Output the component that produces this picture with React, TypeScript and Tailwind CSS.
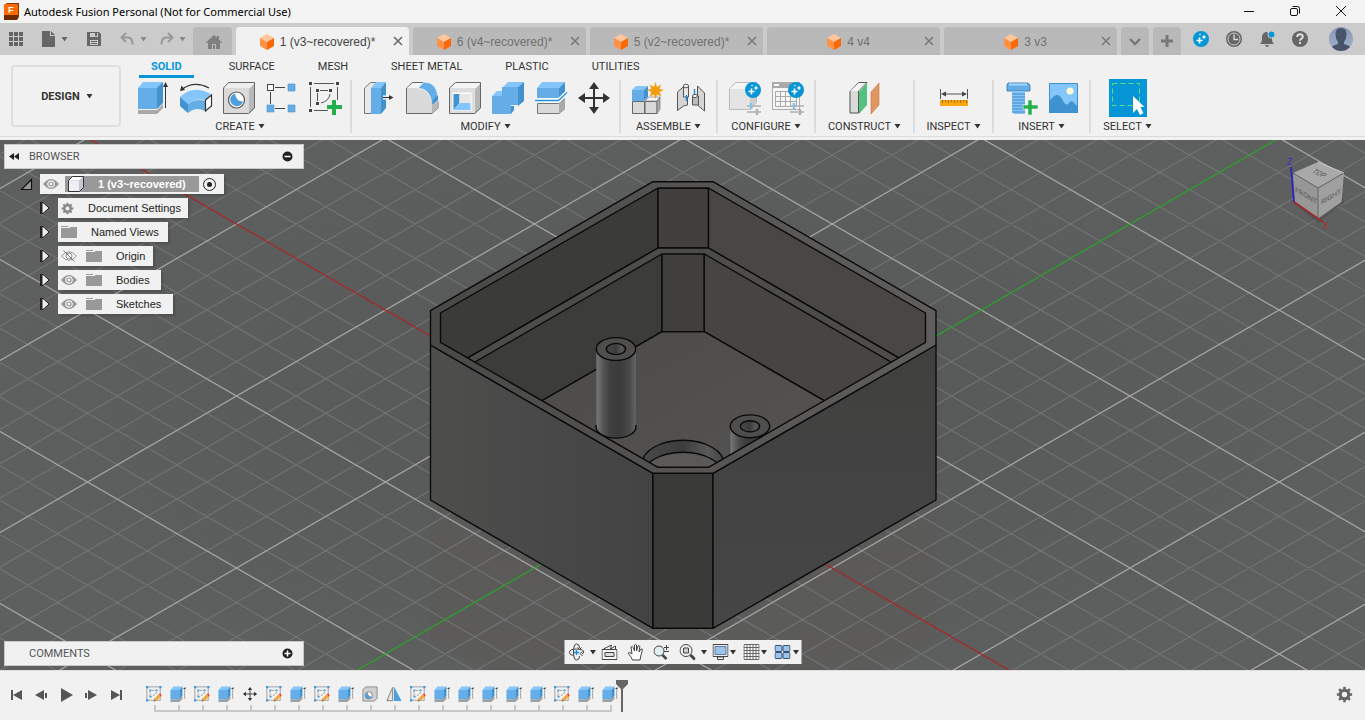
import type { ReactNode } from 'react'

const documents = [
  { name: '1 (v3~recovered)*', active: true },
  { name: '6 (v4~recovered)*', active: false },
  { name: '5 (v2~recovered)*', active: false },
  { name: '4 v4', active: false },
  { name: '3 v3', active: false },
]

const workspaceTabs = ['SURFACE', 'MESH', 'SHEET METAL', 'PLASTIC', 'UTILITIES']

type Feature = 'sketch' | 'extrude' | 'move' | 'hole' | 'mirror'

const timeline: Feature[] = [
  'sketch', 'extrude', 'sketch', 'extrude', 'move', 'sketch', 'extrude',
  'sketch', 'extrude', 'hole', 'mirror', 'sketch', 'extrude', 'extrude',
  'extrude', 'extrude', 'extrude', 'sketch', 'extrude', 'extrude',
]

export default function App() {
  return (
    <div className="flex min-h-screen flex-col bg-[#f1f1f1] font-['Liberation_Sans',Arial,sans-serif] text-[#333]">
      <TitleBar />
      <DocumentBar />
      <Ribbon />
      <Viewport />
      <Timeline />
    </div>
  )
}

function Caret({ className = 'text-[#333]' }: { className?: string }) {
  return (
    <svg viewBox="0 0 7 5" className={`h-[5px] w-[7px] shrink-0 ${className}`} fill="currentColor">
      <path d="M.5 0h6L3.500 4.500z" />
    </svg>
  )
}

/* ---------- title bar and document tabs ---------- */

function TitleBar() {
  return (
    <header className="flex h-[23px] items-center bg-[#f3f3f3] pl-[3px] pr-4">
      <svg viewBox="0 0 16 18" className="h-[18px] w-4">
        <path d="M1 2l3-2h12v14l-2 3H1z" fill="#8a3a08" />
        <path d="M2 1h11a2 2 0 0 1 2 2v9H1V2z" fill="#ff6b00" />
        <path d="M1 12h14v3l-2 2H1z" fill="#6d2a05" />
        <text x="5" y="10" fontSize="9" fontWeight="700" fill="#fff">F</text>
      </svg>
      <h1 className="ml-[5px] flex-1 font-['Noto_Sans','Open_Sans',sans-serif] text-[11px] leading-[20px] text-black">
        Autodesk Fusion Personal (Not for Commercial Use)
      </h1>
      <div className="flex gap-[30px]">
        <button aria-label="Minimize">
          <svg viewBox="0 0 16 16" className="size-4" stroke="#111"><path d="M3 7.500h10" /></svg>
        </button>
        <button aria-label="Restore">
          <svg viewBox="0 0 16 16" className="size-4" fill="none" stroke="#111">
            <rect x="3.500" y="4.500" width="7" height="7" rx="1.500" />
            <path d="M5.500 2.500h5a2 2 0 0 1 2 2v5" />
          </svg>
        </button>
        <button aria-label="Close">
          <svg viewBox="0 0 16 16" className="size-4" stroke="#111"><path d="M3 2l10 10M13 2L3 12" /></svg>
        </button>
      </div>
    </header>
  )
}

function DocumentBar() {
  return (
    <nav className="flex h-8 bg-[#cbcbcb]">
      <div className="flex w-[193px] shrink-0 items-center pl-[9px] text-[#666]">
        <button aria-label="Show data panel">
          <svg viewBox="0 0 14 14" className="size-[14px]" fill="currentColor">
            {[0, 5, 10].map((y) => [0, 5, 10].map((x) => <rect key={`${x}-${y}`} x={x} y={y} width="4" height="4" />))}
          </svg>
        </button>
        <button aria-label="File" className="ml-[19px] flex items-center gap-[6px]">
          <svg viewBox="0 0 13 16" className="h-4 w-[13px]" fill="currentColor">
            <path d="M0 0h8v5h5v11H0z" /><path d="M9 0l4 4H9z" />
          </svg>
          <Caret className="text-[#666]" />
        </button>
        <button aria-label="Save" className="ml-[19px]">
          <svg viewBox="0 0 14 14" className="size-[14px]">
            <path d="M0 0h12l2 2v12H0z" fill="currentColor" />
            <path d="M3 1h8v4H3zM3 8h8v5H3z" fill="#cbcbcb" />
            <path d="M8 1h2v3H8zM4 9h6v1H4zM4 11h6v1H4z" fill="currentColor" />
          </svg>
        </button>
        <button aria-label="Undo" className="ml-[19px] flex items-center gap-[6px] text-[#999]">
          <svg viewBox="0 0 14 14" className="size-[14px]" fill="none" stroke="currentColor" strokeWidth="2">
            <path d="M6 1L1.500 5.500 6 10M2 5.500h6q4.500 0 4.500 7" />
          </svg>
          <Caret className="text-[#888]" />
        </button>
        <button aria-label="Redo" className="ml-[13px] flex items-center gap-[5px] text-[#999]">
          <svg viewBox="0 0 14 14" className="size-[14px]" fill="none" stroke="currentColor" strokeWidth="2">
            <path d="M8 1l4.500 4.500L8 10M12 5.500H6q-4.500 0-4.500 7" />
          </svg>
          <Caret className="text-[#888]" />
        </button>
      </div>
      <div className="flex min-w-0 flex-1 gap-1 pt-1">
        <button aria-label="Home" className="flex w-[39px] shrink-0 items-center justify-center rounded-t bg-[#b9b9b9] pl-[3px] pt-[2px]">
          <svg viewBox="0 0 16 14" className="h-[14px] w-4" fill="#808080">
            <path d="M8 0l3 2.600V1h2v3.500l3 2.700-1 1-1-.8V14h-4V9H6v5H2V7.400l-1 .8-1-1z" />
            <path d="M7 10h2v4H7z" />
          </svg>
        </button>
        {documents.map((doc) => (
          <div
            key={doc.name}
            className={`flex min-w-0 flex-1 items-center rounded-t pl-3 text-[12px] leading-[14px] ${doc.active ? 'bg-[#f1f1f1] text-[#444]' : 'bg-[#b9b9b9] text-[#707070]'}`}
          >
            <button className="flex min-w-0 flex-1 items-center justify-center gap-[6px] pt-px">
              <DocumentCube />
              <span className="whitespace-nowrap">{doc.name}</span>
            </button>
            <button aria-label={`Close ${doc.name}`} className="flex w-[22px] justify-center">
              <svg viewBox="0 0 10 10" className="size-[10px]" stroke={doc.active ? '#666' : '#777'} strokeWidth="1.500">
                <path d="M1 1l8 8M9 1L1 9" />
              </svg>
            </button>
          </div>
        ))}
        <button aria-label="All documents" className="flex w-7 shrink-0 items-center justify-center rounded-t bg-[#b9b9b9] pt-[2px]">
          <svg viewBox="0 0 12 8" className="h-2 w-3" fill="none" stroke="#777" strokeWidth="2.400"><path d="M1 1l5 5 5-5" /></svg>
        </button>
        <button aria-label="New design" className="flex w-7 shrink-0 items-center justify-center rounded-t bg-[#b9b9b9]">
          <svg viewBox="0 0 14 14" className="size-[14px]" stroke="#777" strokeWidth="3"><path d="M7 1v12M1 7h12" /></svg>
        </button>
      </div>
      <div className="flex shrink-0 items-center gap-[15px] pl-[11px] pr-3">
        <button aria-label="Extensions">
          <svg viewBox="0 0 18 18" className="size-[18px]"><Sparkle x={9} y={9} r={8} /></svg>
        </button>
        <button aria-label="Job status">
          <svg viewBox="0 0 18 18" className="size-[18px]">
            <circle cx="9" cy="9" r="8" fill="#666" />
            <circle cx="9" cy="9" r="6" fill="none" stroke="#cbcbcb" />
            <path d="M9 4.500V9.500h4" fill="none" stroke="#ddd" strokeWidth="1.300" />
          </svg>
        </button>
        <button aria-label="Notifications">
          <svg viewBox="0 0 18 18" className="size-[18px]" fill="#666">
            <path d="M8 2q-4 1-4 5v3q0 2-2 4h14q-2-2-2-4V8L9 2z" />
            <path d="M7 15h4q-.5 2-2 2t-2-2z" />
            <circle cx="13.500" cy="4.500" r="3.500" fill="#0696d7" stroke="#cbcbcb" />
          </svg>
        </button>
        <button aria-label="Help">
          <svg viewBox="0 0 18 18" className="size-[18px]">
            <circle cx="9" cy="9" r="8" fill="#666" />
            <path d="M6.200 7q0-2.800 2.800-2.800T11.800 6.800Q11.800 8 10.300 8.800 9 9.500 9 10.700M9 12v2" fill="none" stroke="#ddd" strokeWidth="2" />
          </svg>
        </button>
        <button aria-label="Account" className="ml-[5px]">
          <svg viewBox="0 0 24 24" className="size-6">
            <defs>
              <clipPath id="avatar"><circle cx="12" cy="12" r="12" /></clipPath>
              <linearGradient id="avatarSky" x2="0" y2="1"><stop stopColor="#8a99b4" /><stop offset="1" stopColor="#9fb0cc" /></linearGradient>
            </defs>
            <g clipPath="url(#avatar)">
              <path d="M0 0h24v24H0z" fill="url(#avatarSky)" />
              <path d="M12 1q5.500 0 5.500 6 0 5-2.500 8v2q5 1 7 4v4H2v-4q2-3 7-4v-2Q6.500 12 6.500 7 6.500 1 12 1z" fill="#48546a" />
            </g>
          </svg>
        </button>
      </div>
    </nav>
  )
}

function DocumentCube() {
  return (
    <svg viewBox="0 0 14 16" className="h-4 w-[14px] shrink-0">
      <path d="M7 0l7 4-7 4-7-4z" fill="#ffc59b" />
      <path d="M0 4l7 4v8l-7-4z" fill="#ff9147" />
      <path d="M14 4L7 8v8l7-4z" fill="#f96a06" />
    </svg>
  )
}

function Sparkle({ x, y, r }: { x: number; y: number; r: number }) {
  return (
    <g>
      <circle cx={x} cy={y} r={r} fill="#0696d7" />
      <path d={`M${x - 1.5} ${y - 1.5}v6M${x - 4.5} ${y + 1.5}h6`} stroke="#fff" strokeWidth="1.600" />
      <path d={`M${x + 3} ${y - 4.5}l.8 1.700 1.700.8-1.700.8-.8 1.700-.8-1.700-1.700-.8 1.700-.8z`} fill="#fff" />
      <circle cx={x - 1} cy={y - 4.5} r=".8" fill="#fff" />
    </g>
  )
}

/* ---------- ribbon ---------- */

function Ribbon() {
  return (
    <section className="mb-[3px] flex h-[82px] border-b border-[#dcdcdc] pl-[11px] font-[Roboto,sans-serif] text-[11px] leading-[13px]">
      <button className="mr-[9px] mt-[10px] flex h-[62px] w-[110px] shrink-0 items-center justify-center gap-[6px] rounded border-2 border-[#dedede] pl-[2px] font-bold">
        DESIGN <Caret />
      </button>
      <div className="flex min-w-0 flex-1 flex-col">
        <div className="flex h-6 items-start gap-[43px] whitespace-nowrap pl-[9px]">
          <button className="-mr-2 border-b-[3px] border-[#0696d7] px-3 pb-[2px] pt-[5px] font-bold text-[#0696d7]">SOLID</button>
          {workspaceTabs.map((tab) => (
            <button key={tab} className="pt-[5px]">{tab}</button>
          ))}
        </div>
        <div className="flex">
          <Group label="CREATE" className="w-[222px] border-r-2 pl-px">
            <ExtrudeIcon /><RevolveIcon /><HoleIcon /><PatternIcon /><SketchIcon />
          </Group>
          <Group label="MODIFY" className="w-[269px] border-r-2 pl-[5px]">
            <PressPullIcon /><FilletIcon /><ShellIcon /><CombineIcon /><SplitIcon /><MoveIcon />
          </Group>
          <Group label="ASSEMBLE" className="w-[97px] border-r-2 pl-[5px]">
            <ComponentIcon /><JointIcon />
          </Group>
          <Group label="CONFIGURE" className="w-[98px] border-r-2 pl-[5px]">
            <ConfigureIcon /><TableIcon />
          </Group>
          <Group label="CONSTRUCT" className="w-[99px] border-r-2 pl-[27px]">
            <PlaneIcon />
          </Group>
          <Group label="INSPECT" className="w-[79px] border-r-2 pl-[17px]">
            <MeasureIcon />
          </Group>
          <Group label="INSERT" className="w-[97px] border-r-2 pl-[5px]">
            <BoltIcon /><CanvasIcon />
          </Group>
          <Group label="SELECT" className="w-[73px] pl-[14px]">
            <SelectIcon />
          </Group>
        </div>
      </div>
    </section>
  )
}

function Group({ label, className, children }: { label: string; className: string; children: ReactNode }) {
  return (
    <div className={`relative mt-px flex h-[53px] shrink-0 flex-col border-[#dcdcdc] ${className}`}>
      <div className="flex">{children}</div>
      <button className="absolute inset-x-0 bottom-0 flex items-center justify-center gap-[3px]">
        {label} <Caret />
      </button>
    </div>
  )
}

function Tool({ name, children }: { name: string; children: ReactNode }) {
  return (
    <button aria-label={name} className="w-[43px] shrink-0 pl-1">
      <svg viewBox="0 0 36 36" className="size-9" fill="none">{children}</svg>
    </button>
  )
}

function ExtrudeIcon() {
  return (
    <Tool name="Extrude">
      <path d="M3 30h19l6-6v4l-6 6H3z" fill="#a9a9a9" />
      <path d="M3 8l5-6h20l-5 6z" fill="#84c6fb" />
      <path d="M3 8h19v21H3z" fill="#65ade6" />
      <path d="M22 8l6-6v21l-6 6z" fill="#4192cf" />
      <path d="M30.500 28V5" stroke="#333" />
      <path d="M30.500 2l2.500 5h-5z" fill="#333" />
    </Tool>
  )
}

function RevolveIcon() {
  return (
    <Tool name="Revolve">
      <path d="M3 10Q16 0 31 8" stroke="#333" strokeWidth="1.200" />
      <path d="M2 11l1.500-5.500L7 10z" fill="#333" />
      <path d="M2 17q13-13 31-3l-5 7q-9-4-18 3z" fill="#84c6fb" />
      <path d="M2 17l8 7v9l-8-7z" fill="#4192cf" />
      <path d="M10 24q8-6 17-3v10q-9-5-17 2z" fill="#65ade6" />
      <path d="M27.500 20l6-5v11l-6 5z" fill="#fff" stroke="#333" strokeWidth="1.200" />
    </Tool>
  )
}

function HoleIcon() {
  return (
    <Tool name="Hole">
      <path d="M3 8l6-5h25l-6 6z" fill="#eee" />
      <path d="M28 9l6-6v25l-6 6z" fill="#b8b8b8" />
      <path d="M3 8h25v26H3z" fill="#dadada" />
      <path d="M2.500 33.500V8l5-5.500h26V28l-6 5.500z" stroke="#666" />
      <circle cx="15.500" cy="20" r="8" fill="#fff" stroke="#555" strokeWidth="1.200" />
      <path d="M14 13.500a6.500 6.500 0 1 0 8 8q-7 0-8-8z" fill="#4d9fdd" />
    </Tool>
  )
}

function PatternIcon() {
  return (
    <Tool name="Rectangular pattern">
      <path d="M6.500 12v12M11 7.500h10M11 28.500h10" stroke="#444" />
      <rect x="3.500" y="4.500" width="6" height="6" fill="#fff" stroke="#444" />
      <path d="M24 4h7v7h-7zM3 25h7v7H3zM24 25h7v7h-7z" fill="#65ade6" stroke="#4c93cc" strokeWidth=".6" />
    </Tool>
  )
}

function SketchIcon() {
  return (
    <Tool name="Create sketch">
      <path d="M7 3.500h20M3.500 7v20M30.500 7v13M7 30.500h14M10.500 13v8M13 10.500h8M23 14q-1 7-9 9" stroke="#555" />
      <path d="M2 2h3v3H2zM29 2h3v3h-3zM2 29h3v3H2zM9 9h3v3H9zM22 9h3v3h-3zM9 22h3v3H9z" fill="#444" />
      <path d="M25 20h4v5h6v4h-6v6h-4v-6h-5v-4h5z" fill="#23b04c" />
    </Tool>
  )
}

function PressPullIcon() {
  return (
    <Tool name="Press pull">
      <path d="M3.500 33.500V8l6-5.500H18L11 8v25.500z" fill="#e8e8e8" stroke="#777" />
      <path d="M10 8l5-6h10l-5 6z" fill="#84c6fb" />
      <path d="M10 8h10v26H10z" fill="#65ade6" />
      <path d="M20 8l5-6v26l-5 6z" fill="#4192cf" />
      <path d="M22 17.500h8" stroke="#fff" strokeWidth="4" />
      <path d="M22 17.500h7" stroke="#333" strokeWidth="1.200" />
      <path d="M32.500 17.500L28 20v-5z" fill="#333" />
    </Tool>
  )
}

function FilletIcon() {
  return (
    <Tool name="Fillet">
      <path d="M2.500 33.500V8l6-5.500H20l-5 5q13 1 13 17l6-3V28l-6 5.500z" fill="#dadada" stroke="#666" />
      <path d="M3 8l6-5h12l-6 5z" fill="#f5f5f5" />
      <path d="M28 24l6-5v9l-6 5.500z" fill="#b8b8b8" />
      <path d="M14 8l6-6q14 0 14 18l-6 5Q27 9 14 8z" fill="#65ade6" stroke="#fff" strokeWidth=".7" />
      <path d="M29 20l5-5v5l-6 5z" fill="#4192cf" />
    </Tool>
  )
}

function ShellIcon() {
  return (
    <Tool name="Shell">
      <path d="M3 8l6-5h25l-6 6z" fill="#f5f5f5" />
      <path d="M28 9l6-6v25l-6 6z" fill="#b8b8b8" />
      <path d="M3 8h25v26H3z" fill="#dedede" />
      <path d="M2.500 33.500V8l6-5.500h25V28l-6 5.500z" stroke="#666" />
      <path d="M5.500 12.500h19v18h-19z" fill="#fff" />
      <path d="M6.500 14h6v9l-6 7z" fill="#4192cf" />
      <path d="M12.500 14h11v9h-11z" fill="#e6e6e6" />
      <path d="M12.500 23h11v7h-17z" fill="#84c6fb" />
    </Tool>
  )
}

function CombineIcon() {
  return (
    <Tool name="Combine">
      <path d="M2 16l5-5h6V7l5-5h16l-6 5H12v9z" fill="#84c6fb" />
      <path d="M2 16h10V7h16v18h-7v9H2z" fill="#65ade6" />
      <path d="M28 7l6-5v19l-6 5zM21 26h3v4l-3 4z" fill="#4192cf" />
    </Tool>
  )
}

function SplitIcon() {
  return (
    <Tool name="Split body">
      <path d="M4 8l5-6h23l-6 6z" fill="#84c6fb" />
      <path d="M4 8h22v10H4z" fill="#65ade6" />
      <path d="M26 8l6-6v10l-6 6z" fill="#4192cf" />
      <path d="M4.500 23.500H26l5.500-5V29L26 33.500H4.500z" fill="#dadada" stroke="#777" />
      <path d="M26 23.500l6-5V29l-6 5z" fill="#aaa" />
      <path d="M2 20.500h23.500l8.500-8" stroke="#fff" strokeWidth="4" />
      <path d="M2 20.500h23.500l8.500-8" stroke="#1f8fdf" strokeWidth="1.400" />
    </Tool>
  )
}

function MoveArrows() {
  return (
    <>
      <path d="M18 5v26M5 18h26" stroke="#333" strokeWidth="2" />
      <path d="M18 2l5 7H13zM18 34l5-7H13zM2 18l7-5v10zM34 18l-7-5v10z" fill="#333" />
    </>
  )
}

function MoveIcon() {
  return <Tool name="Move"><MoveArrows /></Tool>
}

function ComponentIcon() {
  return (
    <Tool name="New component">
      <path d="M2.500 21.500h12v12h-12zM15 21.500h12v12H15z" fill="#dadada" stroke="#666" />
      <path d="M15 21l4-4h11l-3 4z" fill="#f5f5f5" stroke="#777" strokeWidth=".6" />
      <path d="M27 21l3-4v12l-3 4.500z" fill="#aaa" stroke="#666" strokeWidth=".6" />
      <path d="M2 10l4-4h12l-4 4z" fill="#84c6fb" />
      <path d="M2 10h12v11H2z" fill="#65ade6" />
      <path d="M14 10l4-4v11l-4 4z" fill="#4192cf" />
      <path d="M25.500 2l1.500 5 4-2.500L29.500 9l4.500 1-4.500 2 2 4.500-4.500-2-1.500 4.500-1.500-4.500-4.500 2 2-4.500-4.500-2 4.500-1L19.500 4.500 24 7z" fill="#f59c0b" />
    </Tool>
  )
}

function JointIcon() {
  return (
    <Tool name="Joint">
      <path d="M4.500 30.500V12l8-7h2v20l-4 1z" fill="#d5d5d5" stroke="#555" />
      <path d="M10.500 6v11h5V6z" fill="#e8e8e8" stroke="#555" />
      <ellipse cx="13" cy="6" rx="2.500" ry="1.800" fill="#fff" stroke="#555" />
      <path d="M13.500 15v6M21.500 9v6" stroke="#1f8fdf" strokeWidth="1.400" />
      <path d="M24.500 6l7 7v18l-7-6z" fill="#d5d5d5" stroke="#555" />
      <path d="M19.500 16v9h6V16z" fill="#bbb" stroke="#555" />
      <ellipse cx="22" cy="16" rx="2.500" ry="1.600" fill="#fff" stroke="#555" />
    </Tool>
  )
}

function Sliders() {
  return (
    <>
      <path d="M20 26h14M20 32h14" stroke="#b0b0b0" strokeWidth="1.600" />
      <path d="M30 29v6" stroke="#b0b0b0" strokeWidth="2.500" />
      <path d="M24 23v6" stroke="#82c0ee" strokeWidth="2.500" />
    </>
  )
}

function ConfigureIcon() {
  return (
    <Tool name="Configure design">
      <path d="M2.500 29.500V9l6-6.500h21V22l-6 7.500z" fill="#e4e4e4" stroke="#bbb" />
      <path d="M3 9l6-6h20l-6 6z" fill="#f6f6f6" />
      <path d="M23 9l6-6v19l-6 7z" fill="#cfcfcf" />
      <Sliders />
      <Sparkle x={26} y={10} r={8} />
    </Tool>
  )
}

function TableIcon() {
  return (
    <Tool name="Configuration table">
      <path d="M2.500 2.500h27v27h-27z" fill="#f6f6f6" stroke="#aaa" />
      <path d="M2 2h28v6H2z" fill="#aaa" />
      <path d="M4 4h5v2H4z" fill="#fff" />
      <path d="M5.500 11.500h21v15h-21zM5.500 16.500h21M5.500 21.500h21M10.500 11v15M15.500 11v15M20.500 11v15" stroke="#aaa" />
      <Sliders />
      <Sparkle x={26} y={10} r={8} />
    </Tool>
  )
}

function PlaneIcon() {
  return (
    <Tool name="Offset plane">
      <path d="M3 11.500L11.500 2.500H20L11.500 11v22H3z" fill="#dadada" stroke="#555" />
      <path d="M3.500 11l8-8h7l-7.500 8z" fill="#f5f5f5" />
      <path d="M12 12l8-9v22l-8 9z" fill="#53c27e" />
      <path d="M24 12l8-9v22l-8 9z" fill="#e19561" stroke="#c47b48" strokeWidth=".6" />
    </Tool>
  )
}

function MeasureIcon() {
  return (
    <Tool name="Measure">
      <path d="M4.500 9v10M31.500 9v10M7 14h22" stroke="#555" />
      <path d="M5 14l5-2.500v5zM31 14l-5-2.500v5z" fill="#444" />
      <path d="M4 20h28v6H4z" fill="#f9a70d" />
      <path d="M6.500 20v3M9.500 20v2M12.500 20v3M15.500 20v2M18.500 20v3M21.500 20v2M24.500 20v3M27.500 20v2M30.500 20v3" stroke="#8d5b00" strokeWidth=".8" />
    </Tool>
  )
}

function BoltIcon() {
  return (
    <Tool name="Insert fastener">
      <path d="M5 3h20l2 2v6H4V5z" fill="#65ade6" stroke="#3577a8" strokeWidth=".8" />
      <path d="M6 3.500h18v2H6z" fill="#a9d8fb" />
      <path d="M9 11h13v23H11l-2-2z" fill="#84c6fb" />
      <path d="M9 14h13M9 17h13M9 20h13M9 23h13M9 26h13M9 29h13M9 32h13" stroke="#3f87bf" />
      <path d="M25 20h4v5h6v4h-6v6h-4v-6h-5v-4h5z" fill="#23b04c" stroke="#f1f1f1" strokeWidth=".6" />
    </Tool>
  )
}

function CanvasIcon() {
  return (
    <Tool name="Insert canvas">
      <path d="M3.500 3.500h28v29h-28z" fill="#84c6fb" stroke="#3e92d0" />
      <path d="M3 22q5-8 9-7 3 1 5 6 3 5 5 3 3-4 5-2l5 5v6H3z" fill="#3e92d0" />
      <circle cx="24" cy="11" r="3.500" fill="#fffbd0" />
    </Tool>
  )
}

function SelectIcon() {
  return (
    <button aria-label="Select" className="-mt-px mx-1 bg-[#0696d7]">
      <svg viewBox="0 0 38 38" className="size-[38px]" fill="none">
        <path d="M3.500 4.500h27v22h-27z" stroke="#5fe07a" strokeDasharray="5 3" />
        <path d="M24 17v17l4-4 3 6 3.500-2-3-6h4z" fill="#fff" />
      </svg>
    </button>
  )
}

/* ---------- model canvas ---------- */

// isometric ground grid: lines at 30 degrees through the origin point
const ORIGIN = { x: 683.3, y: 482 }
const SLOPE = 0.5774
const STEP = 34.4

function gridPath(major: boolean) {
  let d = ''
  for (let k = -26; k <= 26; k++) {
    if (k === 0 || (k % 5 === 0) !== major) continue
    for (const s of [SLOPE, -SLOPE]) {
      const y = ORIGIN.y + k * STEP
      d += `M-60 ${(y + s * (-60 - ORIGIN.x)).toFixed(1)}L1425 ${(y + s * (1425 - ORIGIN.x)).toFixed(1)}`
    }
  }
  return d
}

function axisPath(s: number) {
  return `M-60 ${ORIGIN.y + s * (-60 - ORIGIN.x)}L1425 ${ORIGIN.y + s * (1425 - ORIGIN.x)}`
}

function Model() {
  return (
    <svg viewBox="0 140 1365 530" preserveAspectRatio="xMidYMid slice" className="absolute inset-0 size-full">
      <defs>
        <radialGradient id="ground">
          <stop stopColor="#555656" /><stop offset="1" stopColor="#5e5f5f" />
        </radialGradient>
        <linearGradient id="wallLeft"><stop stopColor="#4e4e4d" /><stop offset="1" stopColor="#434343" /></linearGradient>
        <linearGradient id="wallRight" x2="0" y2="1"><stop stopColor="#40403f" /><stop offset="1" stopColor="#464646" /></linearGradient>
        <linearGradient id="floor" x2="1" y2="1"><stop stopColor="#4a4947" /><stop offset="1" stopColor="#5b5957" /></linearGradient>
        <linearGradient id="rim"><stop stopColor="#4a4947" /><stop offset="1" stopColor="#5f5e5c" /></linearGradient>
        <linearGradient id="post">
          <stop stopColor="#787878" /><stop offset=".2" stopColor="#505050" /><stop offset=".35" stopColor="#404040" />
          <stop offset=".6" stopColor="#3b3b3a" /><stop offset=".85" stopColor="#4a4a4a" /><stop offset="1" stopColor="#666" />
        </linearGradient>
        <linearGradient id="bore"><stop stopColor="#4a4a4a" /><stop offset=".5" stopColor="#3c3c3c" /><stop offset=".8" stopColor="#5a5a5a" /><stop offset="1" stopColor="#444" /></linearGradient>
        <clipPath id="opening">
          <path d="M658 188H708.500L925.500 313V342.300L708.500 467.300H658L440.500 342.300V313z" />
        </clipPath>
      </defs>
      <path d="M-60 100h1500v620H-60z" fill="url(#ground)" />
      <path d="M430 500h506v140L713 760h-60L430 640z" fill="#5c5b58" opacity=".4" />
      <path d={gridPath(false)} stroke="#7d7f7f" strokeWidth="1.200" opacity=".65" />
      <path d={gridPath(true)} stroke="#a4a4a4" strokeWidth="1.300" />
      <path d={axisPath(SLOPE)} stroke="#a52a2a" strokeWidth="1.300" />
      <path d={axisPath(-SLOPE)} stroke="#2ca02c" strokeWidth="1.300" />

      <g stroke="#0a0a0a" strokeWidth="1.400" strokeLinejoin="round">
        <path d="M430.500 345L653 473.300V628.300L430.500 500z" fill="url(#wallLeft)" />
        <path d="M653 473.300H713V628.300H653z" fill="#3a3a39" />
        <path d="M936 345L713 473.300V628.300L936 500z" fill="url(#wallRight)" />
        <path d="M653 181.700H713L936 310.700V345L713 473.300H653L430.500 345V310.700z" fill="url(#rim)" />
        <g clipPath="url(#opening)">
          <path d="M658 188V248L430 379.700V313z" fill="#3b3b3a" />
          <path d="M658 188H708.500V248H658z" fill="#41403f" />
          <path d="M708.500 188V248L936 379.400V313z" fill="#484746" />
          <path d="M658 248H708.500L936 379.400V480H430V379.700z" fill="#4d4c4a" />
          <path d="M662 254V331.700L430 465V388z" fill="#3c3c3b" />
          <path d="M662 254H704.300V331.700H662z" fill="#403f3e" />
          <path d="M704.300 254V331.700L936 465V388z" fill="#464544" />
          <path d="M662 331.700H704.300L936 465V600H430V465z" fill="url(#floor)" />
          <ellipse cx="683" cy="464" rx="41" ry="23.700" fill="url(#bore)" />
          <ellipse cx="683" cy="476" rx="41" ry="23.700" fill="#5a5957" />
          <path d="M730.400 426.300V500H769.600V426.300z" fill="url(#post)" stroke="none" />
          <path d="M596.400 349V426.700A19.700 11.400 0 0 0 635.800 426.700V349z" fill="url(#post)" stroke="none" />
          <path d="M596 425v1.700A20 11.400 0 0 0 636 426.700V425" fill="none" />
        </g>
        <path d="M658 188H708.500L925.500 313V342.300L708.500 467.300H658L440.500 342.300V313z" fill="none" />
        <ellipse cx="616" cy="349" rx="19.700" ry="11.400" fill="#4f4e4c" />
        <ellipse cx="616" cy="349" rx="9.600" ry="5.600" fill="url(#bore)" />
        <ellipse cx="750" cy="426.300" rx="19.700" ry="11.400" fill="#4f4e4c" />
        <ellipse cx="750" cy="426.300" rx="9.600" ry="5.600" fill="url(#bore)" />
      </g>
    </svg>
  )
}

function ViewCube() {
  return (
    <svg viewBox="1285 152 64 80" className="absolute right-4 top-3 h-20 w-16 font-[Roboto,sans-serif]">
      <path d="M1294 203l24 20 26-20-4-12h-40z" fill="#444" opacity=".45" />
      <path d="M1293 173L1318 162l26 11-26 15z" fill="#a9a9a9" />
      <path d="M1293 173l25 15v30.500L1294 202z" fill="#979797" />
      <path d="M1344 173l-26 15v30.500L1341.500 202z" fill="#a0a0a0" />
      <path d="M1293 173l25 15 26-15M1318 188v30" fill="none" stroke="#555" strokeWidth=".8" />
      <path d="M1318 162l26 11" stroke="#ccc" />
      <path d="M1291 167l3 35" stroke="#2c2cb8" strokeWidth="2" />
      <path d="M1294 202l29 20" stroke="#9c2a2a" strokeWidth="2" />
      <text x="1287" y="165" fontSize="9" fill="#3434c0">Z</text>
      <text x="1323" y="229" fontSize="9" fill="#a83232">X</text>
      <g fontSize="7" fill="#555" textAnchor="middle">
        <text transform="translate(1306 198) skewY(30)">FRONT</text>
        <text transform="translate(1331 199) skewY(-30)">RIGHT</text>
        <text transform="translate(1317 175) rotate(24) skewX(-30)">TOP</text>
      </g>
    </svg>
  )
}

function Viewport() {
  return (
    <main className="relative min-h-[530px] flex-1 overflow-hidden bg-[#5a5a59]">
      <Model />
      <ViewCube />
      <div className="relative w-[304px] pl-1 pt-1">
        <Browser />
      </div>
      <div className="absolute bottom-[4px] left-1 flex h-[25px] w-[300px] items-center border border-[#c8c8c8] bg-[#f1f1f1] pl-6 pr-[10px]">
        <h2 className="flex-1 font-[Roboto,sans-serif] text-[11px] leading-[13px] text-[#555]">COMMENTS</h2>
        <button aria-label="Expand comments">
          <svg viewBox="0 0 11 11" className="size-[11px]">
            <circle cx="5.500" cy="5.500" r="5" fill="#222" />
            <path d="M5.500 2.500v6M2.500 5.500h6" stroke="#fff" strokeWidth="1.500" />
          </svg>
        </button>
      </div>
      <NavBar />
    </main>
  )
}

function Eye({ hidden = false }: { hidden?: boolean }) {
  return (
    <svg viewBox="0 0 16 12" className="h-3 w-4 shrink-0" fill="none">
      {hidden ? (
        <g stroke="#999">
          <path d="M.5 6Q8-2.500 15.500 6 8 14.500.5 6z" />
          <circle cx="8" cy="6" r="3" />
          <path d="M2.500.5l11 11" stroke="#777" />
        </g>
      ) : (
        <>
          <path d="M0 6Q8-4 16 6 8 16 0 6z" fill="#999" />
          <circle cx="8" cy="6" r="3.200" stroke="#f1f1f1" strokeWidth="1.200" />
          <circle cx="8" cy="6" r="1.400" fill="#f1f1f1" />
        </>
      )}
    </svg>
  )
}

function Folder() {
  return (
    <svg viewBox="0 0 16 14" className="h-[14px] w-4 shrink-0" fill="#999">
      <path d="M0 1h7v1H0zM0 3h8l2-1h6v11H0z" />
    </svg>
  )
}

function Gear({ className }: { className: string }) {
  return (
    <svg viewBox="0 0 16 16" className={className} fill="none" stroke="currentColor">
      <circle cx="8" cy="8" r="4" strokeWidth="3" />
      <path d="M8 .8v2.700M8 12.500v2.700M.8 8h2.700M12.500 8h2.700M2.900 2.900l2 2M11.100 11.100l2 2M13.100 2.900l-2 2M4.900 11.100l-2 2" strokeWidth="2.400" />
    </svg>
  )
}

function TreeRow({ label, eye, icon, className }: { label: string; eye?: ReactNode; icon: ReactNode; className: string }) {
  return (
    <li className="flex h-5 items-center gap-[8px] pl-9">
      <button aria-label={`Expand ${label}`}>
        <svg viewBox="0 0 10 14" className="h-[14px] w-[10px]">
          <path d="M1 1v12" stroke="#222" strokeWidth="2" />
          <path d="M2 1.500h1l6 5.500-6 5.500H2z" fill="#eee" stroke="#222" />
        </svg>
      </button>
      <button className={`flex h-5 items-center bg-[#f1f1f1] pl-[3px] text-left shadow-[2px_2px_2px_rgba(0,0,0,0.15)] ${className}`}>
        {eye && <span className="mr-[9px]">{eye}</span>}
        {icon}
        <span className="ml-[14px] whitespace-nowrap">{label}</span>
      </button>
    </li>
  )
}

function Browser() {
  return (
    <section className="text-[11px] leading-[13px] text-[#222]">
      <div className="flex h-[25px] items-center border border-[#c8c8c8] bg-[#f1f1f1] pl-1 pr-[10px]">
        <button aria-label="Collapse browser">
          <svg viewBox="0 0 10 7" className="h-[7px] w-[10px]" fill="#222"><path d="M5 0v7L0 3.500zM10 0v7L5 3.500z" /></svg>
        </button>
        <h2 className="ml-[10px] flex-1 font-[Roboto,sans-serif] text-[#555]">BROWSER</h2>
        <button aria-label="Close browser">
          <svg viewBox="0 0 11 11" className="size-[11px]">
            <circle cx="5.500" cy="5.500" r="5" fill="#222" />
            <path d="M2.500 5.500h6" stroke="#fff" strokeWidth="1.500" />
          </svg>
        </button>
      </div>
      <ul className="mt-[5px] flex flex-col gap-1">
        <li className="flex h-5 items-center gap-[7px] pl-4">
          <button aria-label="Collapse component">
            <svg viewBox="0 0 13 13" className="size-[13px]"><path d="M11.500 1.500v10h-10z" fill="#999" stroke="#111" strokeWidth="1.200" /></svg>
          </button>
          <div className="flex h-5 items-center bg-[#f1f1f1] pl-[3px] pr-2 shadow-[2px_2px_2px_rgba(0,0,0,0.15)]">
            <Eye />
            <button className="ml-[6px] flex h-4 w-[134px] items-center bg-[#999] pl-[3px] font-bold text-white">
              <svg viewBox="0 0 16 16" className="size-4 shrink-0">
                <path d="M.5 4.500l4-4h11l-4 4z" fill="#fff" />
                <path d="M.5 4.500h11v11H.5z" fill="#eef0f6" />
                <path d="M11.500 4.500l4-4v11l-4 4z" fill="#c3c7d3" />
                <path d="M.5 4.500l4-4h11v11l-4 4H.5z" fill="none" stroke="#333" />
              </svg>
              <span className="ml-[14px] whitespace-nowrap">1 (v3~recovered)</span>
            </button>
            <label className="ml-1 flex">
              <input type="radio" name="active" defaultChecked aria-label="Activate component" className="peer sr-only" />
              <svg viewBox="0 0 13 13" className="size-[13px]"><circle cx="6.500" cy="6.500" r="6" fill="none" stroke="#222" /><circle cx="6.500" cy="6.500" r="2.500" fill="#222" /></svg>
            </label>
          </div>
        </li>
        <TreeRow label="Document Settings" className="w-[130px]" icon={<Gear className="size-[13px] shrink-0 text-[#888]" />} />
        <TreeRow label="Named Views" className="w-[110px]" icon={<Folder />} />
        <TreeRow label="Origin" className="w-[95px]" eye={<Eye hidden />} icon={<Folder />} />
        <TreeRow label="Bodies" className="w-[103px]" eye={<Eye />} icon={<Folder />} />
        <TreeRow label="Sketches" className="w-[115px]" eye={<Eye />} icon={<Folder />} />
      </ul>
    </section>
  )
}

function NavBar() {
  const icon = 'h-[18px] w-4'
  return (
    <div className="absolute bottom-[6px] left-1/2 flex h-6 w-[237px] -translate-x-1/2 items-center bg-[#f1f1f1] pl-1">
      <button aria-label="Orbit" className="flex items-center gap-[5px]">
        <svg viewBox="0 0 16 18" className={icon} fill="none" stroke="#444">
          <path d="M5 12.500Q.8 12 .8 9.500 1 6 8 6t7.200 3q0 1.500-1.700 2" />
          <path d="M5 9q0-8 3-8t3 4M5 9q0 8 3 8t3-4" />
          <path d="M9 4.500l2 2 2-2M14 8.500l-2.500 2L14 13" />
          <path d="M8 7v5M5.500 9.500h5" stroke="#1f8fdf" strokeWidth="1.500" />
        </svg>
        <Caret />
      </button>
      <button aria-label="Look at" className="ml-[5px]">
        <svg viewBox="0 0 16 18" className={icon} fill="#ddd" stroke="#444">
          <path d="M2 6l8-4-1 4 5-3v3" fill="none" />
          <path d="M.5 6.500h15v10H.5z" fill="#f5f5f5" />
          <path d="M3.500 9.500h9v4h-9z" />
        </svg>
      </button>
      <button aria-label="Pan" className="ml-[10px]">
        <svg viewBox="0 0 16 18" className={icon} fill="#fff" stroke="#444">
          <path d="M5 17q-1-3-4.500-7 1.500-1.500 4 1L3.500 4q1.500-1.500 2.200.5L7 8V2q1.300-1.500 2 0v6l1.500-5q1.500-1 1.800.6L11.500 9l2-3q2-.5 1.300 1.500Q13.500 11 12.500 17z" />
        </svg>
      </button>
      <button aria-label="Zoom" className="ml-[10px]">
        <svg viewBox="0 0 16 18" className={icon} fill="none" stroke="#444">
          <circle cx="5.500" cy="8" r="5" fill="#dff0f4" />
          <path d="M9 12l4 4" strokeWidth="2.500" />
          <path d="M13 2v5M10.500 4.500h5M10.500 8.500h5" />
        </svg>
      </button>
      <button aria-label="Fit" className="ml-[10px] flex items-center gap-[5px]">
        <svg viewBox="0 0 16 18" className={icon} fill="none" stroke="#444">
          <circle cx="6.500" cy="7.500" r="6" fill="#f1f1f1" />
          <path d="M4 5h5v5H4z" fill="#ccc" />
          <path d="M11 12l4.500 4.500" strokeWidth="3" />
        </svg>
        <Caret />
      </button>
      <button aria-label="Display settings" className="ml-[5px] flex items-center gap-px">
        <svg viewBox="0 0 16 18" className={icon} stroke="#444">
          <path d="M.5 1.500h15v12H.5z" fill="#eee" />
          <path d="M2.500 3.500h11v8h-11z" fill="#9dc3e8" stroke="#5d7fa3" />
          <path d="M5 14h6v2.500H5z" fill="#fff" />
        </svg>
        <Caret />
      </button>
      <button aria-label="Grid and snaps" className="ml-[7px] flex items-center gap-px">
        <svg viewBox="0 0 16 18" className={icon} fill="#fff" stroke="#666">
          <path d="M.5 1.500h15v15H.5zM3.500 1v16M6.500 1v16M9.500 1v16M12.500 1v16M0 4.500h16M0 7.500h16M0 10.500h16M0 13.500h16" />
        </svg>
        <Caret />
      </button>
      <button aria-label="Viewports" className="ml-[7px] flex items-center gap-[2px]">
        <svg viewBox="0 0 16 18" className={icon} fill="#9dc3e8" stroke="#3a4f74">
          <rect x=".5" y="2.500" width="7" height="6" rx="1" /><rect x="8.500" y="2.500" width="7" height="6" rx="1" />
          <rect x=".5" y="9.500" width="7" height="6" rx="1" /><rect x="8.500" y="9.500" width="7" height="6" rx="1" />
        </svg>
        <Caret />
      </button>
    </div>
  )
}

/* ---------- timeline ---------- */

const playback = [
  { name: 'Go to beginning', d: 'M2 3h2v10H2zM13 3v10L4 8z' },
  { name: 'Step back', d: 'M10 3v10L1 8zM11 6h2v5h-2z' },
  { name: 'Play', d: 'M2 1v14l12-7z' },
  { name: 'Step forward', d: 'M4 3v10l9-5zM1 6h2v5H1z' },
  { name: 'Go to end', d: 'M2 3v10l9-5zM11 3h2v10h-2z' },
]

function Timeline() {
  return (
    <footer className="flex h-[50px] items-start border-t border-[#dedede] bg-[#f1f1f1] pl-[9px] pr-3 pt-[9px]">
      <div className="flex gap-[9px] pt-[7px]">
        {playback.map((step) => (
          <button key={step.name} aria-label={step.name}>
            <svg viewBox="0 0 16 16" className="size-4" fill="#555"><path d={step.d} /></svg>
          </button>
        ))}
      </div>
      <ol className="ml-[17px] flex pt-[6px]">
        {timeline.map((feature, i) => (
          <li key={i} className="flex w-6 flex-col items-center">
            <button aria-label={feature}>
              <svg viewBox="0 0 36 36" className="size-4" fill="none"><FeatureGlyph feature={feature} /></svg>
            </button>
            <svg viewBox="0 0 24 8" className="mt-[2px] h-2 w-6" fill="#c8c8c8">
              <path d="M12 1h2v6h-2z" />
              <path d={i === 0 ? 'M12 6h12v2H12z' : i === timeline.length - 1 ? 'M0 6h14v2H0z' : 'M0 6h24v2H0z'} />
            </svg>
          </li>
        ))}
      </ol>
      <button aria-label="Timeline marker" className="-ml-[6px]">
        <svg viewBox="0 0 12 32" className="h-8 w-3" fill="#666"><path d="M0 0h12v4L7 9v23H5V9L0 4z" /></svg>
      </button>
      <button aria-label="Timeline settings" className="ml-auto pt-[6px] text-[#666]">
        <Gear className="size-[17px]" />
      </button>
    </footer>
  )
}

function FeatureGlyph({ feature }: { feature: Feature }) {
  switch (feature) {
    case 'sketch':
      return (
        <>
          <path d="M2 2h30v30H2z" stroke="#999" strokeWidth="2" />
          <path d="M9 10v14q14-2 15-14z" stroke="#999" strokeWidth="2" strokeDasharray="5 2" />
          <path d="M0 0h5v5H0zM30 0h5v5h-5zM0 30h5v5H0zM8 8h4v4H8zM22 8h4v4h-4zM8 22h4v4H8z" fill="#3d9be0" />
          <path d="M17 35l2-7 10-10 5 5-10 10z" fill="#f4a937" />
          <path d="M29 18l3-1 3 3-1 4z" fill="#e33" />
          <path d="M17 35l2-6 4 4z" fill="#777" />
        </>
      )
    case 'extrude':
      return (
        <>
          <path d="M1 30h20l7-7v6l-7 7H1z" fill="#a0a0a0" />
          <path d="M1 9l7-8h20l-7 8z" fill="#84c6fb" />
          <path d="M1 9h20v21H1z" fill="#65ade6" />
          <path d="M21 9l7-8v21l-7 8z" fill="#4192cf" />
          <path d="M33 7v22" stroke="#999" strokeWidth="2" />
          <path d="M29 7h6V2z" fill="#333" />
        </>
      )
    case 'move':
      return <MoveArrows />
    case 'hole':
      return (
        <>
          <path d="M2 8l6-6h26v26l-6 6H2z" fill="#cfcfcf" stroke="#888" strokeWidth="2" />
          <circle cx="15" cy="21" r="8" fill="#fff" stroke="#777" strokeWidth="2" />
          <path d="M13 15a7 7 0 1 0 8 9q-7-1-8-9z" fill="#4d9fdd" />
        </>
      )
    case 'mirror':
      return (
        <>
          <path d="M15 3v30H2z" fill="#e5e5e5" stroke="#777" strokeWidth="2" />
          <path d="M18 1l17 33H18z" fill="#4ba1e0" />
        </>
      )
  }
}
